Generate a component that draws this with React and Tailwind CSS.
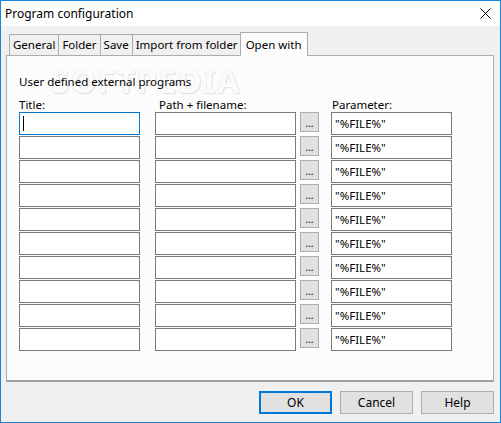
import React from "react";

const rows = Array.from({ length: 10 }, (_, i) => i);
const font = { fontFamily: "'Noto Sans', 'Open Sans', sans-serif" };

function Field({ className = "", focused = false, children }) {
  return (
    <div
      className={`h-[23px] bg-white border flex items-center px-[3px] text-black ${
        focused ? "border-[#0078d7]" : "border-[#7a7a7a]"
      } ${className}`}
    >
      {children}
    </div>
  );
}

export default function App() {
  return (
    <div
      className="w-[501px] h-[423px] border border-[#1883d7] bg-[#f0f0f0] flex flex-col text-[11px] text-black overflow-hidden"
      style={font}
    >
      {/* title bar */}
      <div className="h-[25px] bg-white flex items-center justify-between pl-[4px] pr-[9px]">
        <span className="text-[12px]">Program configuration</span>
        <svg width="11" height="11" viewBox="0 0 11 11">
          <path d="M0.5 0.5 L10.5 10.5 M10.5 0.5 L0.5 10.5" stroke="#000" strokeWidth="1" />
        </svg>
      </div>

      <div className="flex-1 flex flex-col pl-[5px] pr-[6px]">
        {/* tabs */}
        <div className="flex items-end h-[29px] pl-[3px]">
          {["General", "Folder", "Save", "Import from folder"].map((t) => (
            <div
              key={t}
              className="h-[21px] px-[3px] bg-[#f0f0f0] border border-b-0 border-[#adadad] -ml-px first:ml-0 flex items-center leading-none text-[11.5px]"
            >
              {t}
            </div>
          ))}
          <div className="h-[24px] px-[5px] bg-[#fcfcfc] border border-b-0 border-[#adadad] -ml-[2px] -mb-px relative z-10 flex items-center leading-none text-[11.5px]">
            Open with
          </div>
        </div>

        {/* panel */}
        <div className="h-[327px] bg-[#fcfcfc] border border-[#adadad] border-b-2 border-b-[#a0a0a0] relative px-[12px] pt-[20px]">
          <div
            className="absolute left-[44px] top-[8px] text-[33px] font-bold tracking-[1px] text-[#fbfbfb] leading-none select-none"
            style={{ textShadow: "0 0 1px #d6d6d6, 1px 1px 1px #e0e0e0" }}
          >
            SOFTPEDIA
          </div>
          <div className="relative leading-none text-[11.5px]">User defined external programs</div>
          <div className="relative flex mt-[11px] leading-none text-[11.5px]">
            <div className="w-[140px]">Title:</div>
            <div className="w-[173px]">Path + filename:</div>
            <div>Parameter:</div>
          </div>
          <div className="relative flex flex-col gap-px mt-[2px]">
            {rows.map((i) => (
              <div key={i} className="flex items-start">
                <Field className="w-[121px]" focused={i === 0}>
                  {i === 0 ? <span className="w-px h-[15px] bg-black" /> : null}
                </Field>
                <Field className="w-[141px] ml-[15px]" />
                <div className="w-[19px] h-[20px] ml-[4px] bg-[#e1e1e1] border border-[#adadad] flex items-end justify-center pb-[3px] text-[10px] leading-none">
                  ...
                </div>
                <Field className="w-[121px] ml-[12px] text-[11.5px]">"%FILE%"</Field>
              </div>
            ))}
          </div>
        </div>

        {/* buttons */}
        <div className="flex justify-end gap-[8px] mt-[9px]">
          <button className="w-[73px] h-[23px] bg-[#e1e1e1] border-2 border-[#0078d7] text-[12px]">OK</button>
          <button className="w-[73px] h-[23px] bg-[#e1e1e1] border border-[#adadad] text-[12px]">Cancel</button>
          <button className="w-[73px] h-[23px] bg-[#e1e1e1] border border-[#adadad] text-[12px]">Help</button>
        </div>
      </div>
    </div>
  );
}
